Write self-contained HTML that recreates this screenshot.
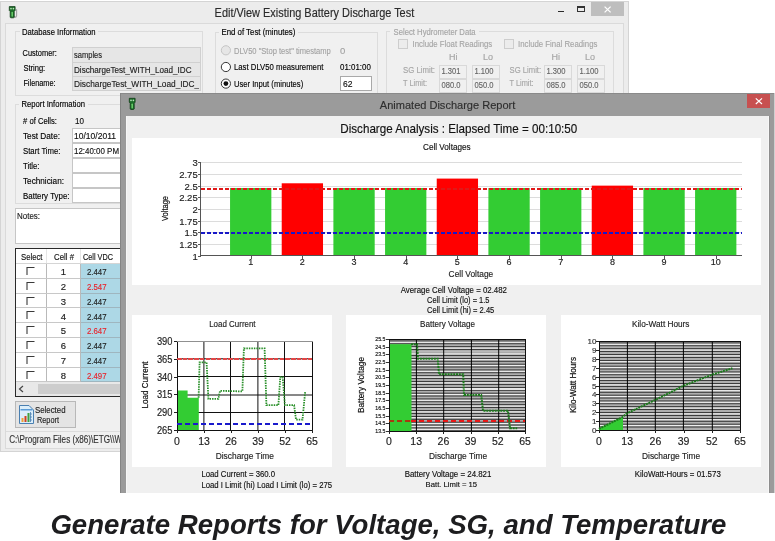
<!DOCTYPE html><html><head><meta charset="utf-8"><style>html,body{margin:0;padding:0;background:#fff;overflow:hidden;}svg{display:block;will-change:transform;}text{font-family:"Liberation Sans",sans-serif;white-space:pre;}.ui text{stroke-width:0.25;paint-order:stroke;}</style></head><body>
<svg width="775" height="541" viewBox="0 0 775 541" shape-rendering="crispEdges">
<rect x="0" y="0" width="775" height="541" fill="#ffffff" />
<rect x="0" y="1" width="629" height="451" fill="#ececec" />
<rect x="5" y="23" width="619" height="426" fill="#f0f0f0" />
<rect x="0.5" y="1.5" width="628" height="450" fill="none" stroke="#d4d4d4" stroke-width="1"/>
<g transform="translate(9,6.3)" shape-rendering="geometricPrecision"><path d="M6.8 3.5 H7.6 V9.5 L6.8 10.8 H5" fill="none" stroke="#a0a0a0" stroke-width="1.1"/><path d="M0.3 0.3 H6.1 V4.2 L5.2 5.2 V11 L4.4 11.5 H1.8 L1.2 11 V5.2 L0.3 4.2 Z" fill="#1d6e2a" stroke="#123d18" stroke-width="0.8"/><circle cx="2" cy="2.3" r="0.85" fill="#b8e4b8"/><circle cx="4.4" cy="2.3" r="0.85" fill="#b8e4b8"/><rect x="2.5" y="5.5" width="1.4" height="5" rx="0.7" fill="#6fd46f"/></g>
<text x="214.6" y="17" font-size="12.3" fill="#2b2b2b" text-anchor="start" font-weight="normal" font-style="normal" textLength="199.6" lengthAdjust="spacingAndGlyphs" stroke="#2b2b2b" stroke-width="0.15" >Edit/View Existing Battery Discharge Test</text>
<line x1="558" y1="11.3" x2="564" y2="11.3" stroke="#2a2a2a" stroke-width="1.6"/>
<rect x="577.5" y="6.5" width="7" height="5" fill="none" stroke="#333" stroke-width="1"/>
<line x1="577" y1="7.5" x2="585" y2="7.5" stroke="#333" stroke-width="1"/>
<rect x="591" y="2" width="33" height="14" fill="#bebebe" />
<path d="M604.6 6.6 L610.6 12.4 M610.6 6.6 L604.6 12.4" stroke="#fff" stroke-width="1.3" shape-rendering="geometricPrecision"/>
<rect x="5.5" y="23.5" width="618" height="425" fill="none" stroke="#dadada" stroke-width="1"/>
<rect x="15.5" y="31.5" width="187" height="64" fill="none" stroke="#dcdcdc" stroke-width="1"/>
<rect x="20" y="28" width="78" height="6" fill="#f0f0f0" />
<text x="22" y="34.8" font-size="9" fill="#000000" text-anchor="start" font-weight="normal" font-style="normal" textLength="73.5" lengthAdjust="spacingAndGlyphs" stroke="#000000" stroke-width="0.15" >Database Information</text>
<text x="22.6" y="56" font-size="9.5" fill="#000000" text-anchor="start" font-weight="normal" font-style="normal" textLength="34.2" lengthAdjust="spacingAndGlyphs" stroke="#000000" stroke-width="0.15" >Customer:</text>
<text x="23.4" y="70.8" font-size="9.5" fill="#000000" text-anchor="start" font-weight="normal" font-style="normal" textLength="21.8" lengthAdjust="spacingAndGlyphs" stroke="#000000" stroke-width="0.15" >String:</text>
<text x="23.4" y="85.6" font-size="9.5" fill="#000000" text-anchor="start" font-weight="normal" font-style="normal" textLength="32.2" lengthAdjust="spacingAndGlyphs" stroke="#000000" stroke-width="0.15" >Filename:</text>
<rect x="72.5" y="47.5" width="128" height="15" fill="#e6e6e6" stroke="#d0d0d0" stroke-width="1"/>
<rect x="72.5" y="62.5" width="128" height="14" fill="#e6e6e6" stroke="#d0d0d0" stroke-width="1"/>
<rect x="72.5" y="76.5" width="128" height="14" fill="#e6e6e6" stroke="#d0d0d0" stroke-width="1"/>
<text x="74" y="58" font-size="9.5" fill="#222" text-anchor="start" font-weight="normal" font-style="normal" textLength="28" lengthAdjust="spacingAndGlyphs" stroke="#222" stroke-width="0.15" >samples</text>
<text x="74" y="72.6" font-size="9.5" fill="#222" text-anchor="start" font-weight="normal" font-style="normal" textLength="117.5" lengthAdjust="spacingAndGlyphs" stroke="#222" stroke-width="0.15" >DischargeTest_WITH_Load_IDC</text>
<svg x="72" y="76" width="127" height="15" overflow="hidden">
<text x="2" y="11.1" font-size="9.5" fill="#222" text-anchor="start" font-weight="normal" font-style="normal" textLength="128" lengthAdjust="spacingAndGlyphs" stroke="#222" stroke-width="0.15" >DischargeTest_WITH_Load_IDC_(</text>
</svg>
<rect x="215.5" y="32.5" width="162" height="67" fill="none" stroke="#dcdcdc" stroke-width="1"/>
<rect x="219" y="29" width="79" height="6" fill="#f0f0f0" />
<text x="221.4" y="34.8" font-size="9" fill="#000000" text-anchor="start" font-weight="normal" font-style="normal" textLength="74" lengthAdjust="spacingAndGlyphs" stroke="#000000" stroke-width="0.15" >End of Test (minutes)</text>
<circle cx="225.9" cy="50.3" r="4.6" fill="#e6e6e6" stroke="#c4c4c4" shape-rendering="geometricPrecision"/>
<circle cx="225.9" cy="67" r="4.6" fill="#fff" stroke="#333" shape-rendering="geometricPrecision"/>
<circle cx="225.9" cy="83.6" r="4.6" fill="#fff" stroke="#333" shape-rendering="geometricPrecision"/>
<circle cx="225.9" cy="83.6" r="2.4" fill="#111" shape-rendering="geometricPrecision"/>
<text x="234" y="53.5" font-size="9.5" fill="#a3a3a3" text-anchor="start" font-weight="normal" font-style="normal" textLength="96.8" lengthAdjust="spacingAndGlyphs" stroke="#a3a3a3" stroke-width="0.15" >DLV50 "Stop test" timestamp</text>
<text x="340" y="53.5" font-size="9.5" fill="#a3a3a3" text-anchor="start" font-weight="normal" font-style="normal" stroke="#a3a3a3" stroke-width="0.15" >0</text>
<text x="234" y="70.3" font-size="9.5" fill="#000000" text-anchor="start" font-weight="normal" font-style="normal" textLength="89.4" lengthAdjust="spacingAndGlyphs" stroke="#000000" stroke-width="0.15" >Last DLV50 measurement</text>
<text x="340" y="70.3" font-size="9.5" fill="#000000" text-anchor="start" font-weight="normal" font-style="normal" textLength="30.8" lengthAdjust="spacingAndGlyphs" stroke="#000000" stroke-width="0.15" >01:01:00</text>
<text x="234" y="86.6" font-size="9.5" fill="#000000" text-anchor="start" font-weight="normal" font-style="normal" textLength="69.2" lengthAdjust="spacingAndGlyphs" stroke="#000000" stroke-width="0.15" >User Input (minutes)</text>
<rect x="340.5" y="76.5" width="31" height="14" fill="#ffffff" stroke="#a9a9a9" stroke-width="1"/>
<text x="343" y="86.6" font-size="9.5" fill="#111" text-anchor="start" font-weight="normal" font-style="normal" textLength="9.5" lengthAdjust="spacingAndGlyphs" stroke="#111" stroke-width="0.15" >62</text>
<rect x="386.5" y="31.5" width="227" height="68" fill="none" stroke="#dcdcdc" stroke-width="1"/>
<rect x="390" y="28" width="89" height="6" fill="#f0f0f0" />
<text x="393.6" y="34.7" font-size="9" fill="#a5a5a5" text-anchor="start" font-weight="normal" font-style="normal" textLength="82" lengthAdjust="spacingAndGlyphs" stroke="#a5a5a5" stroke-width="0.15" >Select Hydrometer Data</text>
<rect x="398.5" y="39.5" width="9" height="9" fill="#ececec" stroke="#cdcdcd" stroke-width="1"/>
<text x="412.5" y="47.1" font-size="9.5" fill="#a5a5a5" text-anchor="start" font-weight="normal" font-style="normal" textLength="79.7" lengthAdjust="spacingAndGlyphs" stroke="#a5a5a5" stroke-width="0.15" >Include Float Readings</text>
<rect x="504.5" y="39.5" width="9" height="9" fill="#ececec" stroke="#cdcdcd" stroke-width="1"/>
<text x="518" y="47.1" font-size="9.5" fill="#a5a5a5" text-anchor="start" font-weight="normal" font-style="normal" textLength="79.4" lengthAdjust="spacingAndGlyphs" stroke="#a5a5a5" stroke-width="0.15" >Include Final Readings</text>
<text x="449.0" y="59.5" font-size="9" fill="#a5a5a5" text-anchor="start" font-weight="normal" font-style="normal" stroke="#a5a5a5" stroke-width="0.15" >Hi</text>
<text x="483" y="59.5" font-size="9" fill="#a5a5a5" text-anchor="start" font-weight="normal" font-style="normal" stroke="#a5a5a5" stroke-width="0.15" >Lo</text>
<text x="403" y="73.2" font-size="9.5" fill="#a5a5a5" text-anchor="start" font-weight="normal" font-style="normal" textLength="32" lengthAdjust="spacingAndGlyphs" stroke="#a5a5a5" stroke-width="0.15" >SG Limit:</text>
<text x="403" y="85.8" font-size="9.5" fill="#a5a5a5" text-anchor="start" font-weight="normal" font-style="normal" textLength="24" lengthAdjust="spacingAndGlyphs" stroke="#a5a5a5" stroke-width="0.15" >T Limit:</text>
<rect x="439.5" y="65.5" width="27" height="13" fill="#f0f0f0" stroke="#d9d9d9" stroke-width="1"/>
<rect x="472.5" y="65.5" width="27" height="13" fill="#f0f0f0" stroke="#d9d9d9" stroke-width="1"/>
<rect x="439.5" y="79.5" width="27" height="13" fill="#f0f0f0" stroke="#d9d9d9" stroke-width="1"/>
<rect x="472.5" y="79.5" width="27" height="13" fill="#f0f0f0" stroke="#d9d9d9" stroke-width="1"/>
<text x="441.5" y="74.3" font-size="9.5" fill="#666666" text-anchor="start" font-weight="normal" font-style="normal" textLength="19" lengthAdjust="spacingAndGlyphs" stroke="#666666" stroke-width="0.15" >1.301</text>
<text x="474.5" y="74.3" font-size="9.5" fill="#666666" text-anchor="start" font-weight="normal" font-style="normal" textLength="19" lengthAdjust="spacingAndGlyphs" stroke="#666666" stroke-width="0.15" >1.100</text>
<text x="441.5" y="88.4" font-size="9.5" fill="#666666" text-anchor="start" font-weight="normal" font-style="normal" textLength="19" lengthAdjust="spacingAndGlyphs" stroke="#666666" stroke-width="0.15" >080.0</text>
<text x="474.5" y="88.4" font-size="9.5" fill="#666666" text-anchor="start" font-weight="normal" font-style="normal" textLength="19" lengthAdjust="spacingAndGlyphs" stroke="#666666" stroke-width="0.15" >050.0</text>
<text x="551.5" y="59.5" font-size="9" fill="#a5a5a5" text-anchor="start" font-weight="normal" font-style="normal" stroke="#a5a5a5" stroke-width="0.15" >Hi</text>
<text x="585" y="59.5" font-size="9" fill="#a5a5a5" text-anchor="start" font-weight="normal" font-style="normal" stroke="#a5a5a5" stroke-width="0.15" >Lo</text>
<text x="509.6" y="73.2" font-size="9.5" fill="#a5a5a5" text-anchor="start" font-weight="normal" font-style="normal" textLength="31.5" lengthAdjust="spacingAndGlyphs" stroke="#a5a5a5" stroke-width="0.15" >SG Limit:</text>
<text x="509.6" y="85.8" font-size="9.5" fill="#a5a5a5" text-anchor="start" font-weight="normal" font-style="normal" textLength="24" lengthAdjust="spacingAndGlyphs" stroke="#a5a5a5" stroke-width="0.15" >T Limit:</text>
<rect x="544.5" y="65.5" width="27" height="13" fill="#f0f0f0" stroke="#d9d9d9" stroke-width="1"/>
<rect x="577.5" y="65.5" width="27" height="13" fill="#f0f0f0" stroke="#d9d9d9" stroke-width="1"/>
<rect x="544.5" y="79.5" width="27" height="13" fill="#f0f0f0" stroke="#d9d9d9" stroke-width="1"/>
<rect x="577.5" y="79.5" width="27" height="13" fill="#f0f0f0" stroke="#d9d9d9" stroke-width="1"/>
<text x="546.5" y="74.3" font-size="9.5" fill="#666666" text-anchor="start" font-weight="normal" font-style="normal" textLength="19" lengthAdjust="spacingAndGlyphs" stroke="#666666" stroke-width="0.15" >1.300</text>
<text x="579.5" y="74.3" font-size="9.5" fill="#666666" text-anchor="start" font-weight="normal" font-style="normal" textLength="19" lengthAdjust="spacingAndGlyphs" stroke="#666666" stroke-width="0.15" >1.100</text>
<text x="546.5" y="88.4" font-size="9.5" fill="#666666" text-anchor="start" font-weight="normal" font-style="normal" textLength="19" lengthAdjust="spacingAndGlyphs" stroke="#666666" stroke-width="0.15" >085.0</text>
<text x="579.5" y="88.4" font-size="9.5" fill="#666666" text-anchor="start" font-weight="normal" font-style="normal" textLength="19" lengthAdjust="spacingAndGlyphs" stroke="#666666" stroke-width="0.15" >050.0</text>
<rect x="15.5" y="104.5" width="114" height="99" fill="none" stroke="#dcdcdc" stroke-width="1"/>
<rect x="19" y="101" width="69" height="6" fill="#f0f0f0" />
<text x="21.5" y="107.3" font-size="9" fill="#000000" text-anchor="start" font-weight="normal" font-style="normal" textLength="63.5" lengthAdjust="spacingAndGlyphs" stroke="#000000" stroke-width="0.15" >Report Information</text>
<text x="23" y="124.3" font-size="9.5" fill="#000000" text-anchor="start" font-weight="normal" font-style="normal" textLength="34" lengthAdjust="spacingAndGlyphs" stroke="#000000" stroke-width="0.15" ># of Cells:</text>
<text x="75" y="123.5" font-size="9.5" fill="#111" text-anchor="start" font-weight="normal" font-style="normal" textLength="9" lengthAdjust="spacingAndGlyphs" stroke="#111" stroke-width="0.15" >10</text>
<text x="23" y="139.2" font-size="9.5" fill="#000000" text-anchor="start" font-weight="normal" font-style="normal" textLength="37" lengthAdjust="spacingAndGlyphs" stroke="#000000" stroke-width="0.15" >Test Date:</text>
<rect x="72.5" y="128.5" width="62" height="14" fill="#ffffff" stroke="#c6c6c6" stroke-width="1"/>
<text x="23" y="154.04999999999998" font-size="9.5" fill="#000000" text-anchor="start" font-weight="normal" font-style="normal" textLength="37.5" lengthAdjust="spacingAndGlyphs" stroke="#000000" stroke-width="0.15" >Start Time:</text>
<rect x="72.5" y="143.5" width="62" height="14" fill="#ffffff" stroke="#c6c6c6" stroke-width="1"/>
<text x="23" y="168.89999999999998" font-size="9.5" fill="#000000" text-anchor="start" font-weight="normal" font-style="normal" textLength="16.5" lengthAdjust="spacingAndGlyphs" stroke="#000000" stroke-width="0.15" >Title:</text>
<rect x="72.5" y="158.5" width="62" height="14" fill="#ffffff" stroke="#c6c6c6" stroke-width="1"/>
<text x="23" y="183.75" font-size="9.5" fill="#000000" text-anchor="start" font-weight="normal" font-style="normal" textLength="41" lengthAdjust="spacingAndGlyphs" stroke="#000000" stroke-width="0.15" >Technician:</text>
<rect x="72.5" y="173.5" width="62" height="14" fill="#ffffff" stroke="#c6c6c6" stroke-width="1"/>
<text x="23" y="198.6" font-size="9.5" fill="#000000" text-anchor="start" font-weight="normal" font-style="normal" textLength="46.5" lengthAdjust="spacingAndGlyphs" stroke="#000000" stroke-width="0.15" >Battery Type:</text>
<rect x="72.5" y="188.5" width="62" height="14" fill="#ffffff" stroke="#c6c6c6" stroke-width="1"/>
<text x="74" y="139.3" font-size="9.5" fill="#111" text-anchor="start" font-weight="normal" font-style="normal" textLength="42" lengthAdjust="spacingAndGlyphs" stroke="#111" stroke-width="0.15" >10/10/2011</text>
<text x="74" y="154.1" font-size="9.5" fill="#111" text-anchor="start" font-weight="normal" font-style="normal" textLength="45" lengthAdjust="spacingAndGlyphs" stroke="#111" stroke-width="0.15" >12:40:00 PM</text>
<rect x="15.5" y="208.5" width="119" height="35" fill="#ffffff" stroke="#c6c6c6" stroke-width="1"/>
<text x="17" y="219" font-size="9.5" fill="#222" text-anchor="start" font-weight="normal" font-style="normal" textLength="23" lengthAdjust="spacingAndGlyphs" stroke="#222" stroke-width="0.15" >Notes:</text>
<rect x="15" y="248" width="110" height="149" fill="#ffffff" />
<rect x="81" y="264" width="40" height="118.5" fill="#add8e6" />
<rect x="16" y="249" width="105" height="15" fill="#ffffff" />
<line x1="46.5" y1="249" x2="46.5" y2="264" stroke="#e6e6e6" stroke-width="1"/>
<line x1="80.5" y1="249" x2="80.5" y2="264" stroke="#e6e6e6" stroke-width="1"/>
<text x="21" y="259.5" font-size="9.5" fill="#111" text-anchor="start" font-weight="normal" font-style="normal" textLength="21.5" lengthAdjust="spacingAndGlyphs" stroke="#111" stroke-width="0.15" >Select</text>
<text x="54" y="259.5" font-size="9.5" fill="#111" text-anchor="start" font-weight="normal" font-style="normal" textLength="20" lengthAdjust="spacingAndGlyphs" stroke="#111" stroke-width="0.15" >Cell #</text>
<text x="83" y="259.5" font-size="9.5" fill="#111" text-anchor="start" font-weight="normal" font-style="normal" textLength="30" lengthAdjust="spacingAndGlyphs" stroke="#111" stroke-width="0.15" >Cell VDC</text>
<line x1="16" y1="263.5" x2="121" y2="263.5" stroke="#d5d5d5" stroke-width="1"/>
<line x1="16" y1="278.5" x2="121" y2="278.5" stroke="#9fb6bf" stroke-width="1"/>
<path d="M27 275 V267.5 H34.5" fill="none" stroke="#3a3a3a" stroke-width="1.1" shape-rendering="geometricPrecision"/>
<text x="63.5" y="275.2" font-size="9.5" fill="#222" text-anchor="middle" font-weight="normal" font-style="normal" stroke="#222" stroke-width="0.15" >1</text>
<text x="87" y="275.2" font-size="9.5" fill="#1e1e1e" text-anchor="start" font-weight="normal" font-style="normal" textLength="19.5" lengthAdjust="spacingAndGlyphs" stroke="#1e1e1e" stroke-width="0.15" >2.447</text>
<line x1="16" y1="293.5" x2="121" y2="293.5" stroke="#9fb6bf" stroke-width="1"/>
<path d="M27 290 V282.5 H34.5" fill="none" stroke="#3a3a3a" stroke-width="1.1" shape-rendering="geometricPrecision"/>
<text x="63.5" y="290.0" font-size="9.5" fill="#222" text-anchor="middle" font-weight="normal" font-style="normal" stroke="#222" stroke-width="0.15" >2</text>
<text x="87" y="290.0" font-size="9.5" fill="#e8242c" text-anchor="start" font-weight="normal" font-style="normal" textLength="19.5" lengthAdjust="spacingAndGlyphs" stroke="#e8242c" stroke-width="0.15" >2.547</text>
<line x1="16" y1="307.5" x2="121" y2="307.5" stroke="#9fb6bf" stroke-width="1"/>
<path d="M27 305 V297.5 H34.5" fill="none" stroke="#3a3a3a" stroke-width="1.1" shape-rendering="geometricPrecision"/>
<text x="63.5" y="304.8" font-size="9.5" fill="#222" text-anchor="middle" font-weight="normal" font-style="normal" stroke="#222" stroke-width="0.15" >3</text>
<text x="87" y="304.8" font-size="9.5" fill="#1e1e1e" text-anchor="start" font-weight="normal" font-style="normal" textLength="19.5" lengthAdjust="spacingAndGlyphs" stroke="#1e1e1e" stroke-width="0.15" >2.447</text>
<line x1="16" y1="322.5" x2="121" y2="322.5" stroke="#9fb6bf" stroke-width="1"/>
<path d="M27 319 V311.5 H34.5" fill="none" stroke="#3a3a3a" stroke-width="1.1" shape-rendering="geometricPrecision"/>
<text x="63.5" y="319.59999999999997" font-size="9.5" fill="#222" text-anchor="middle" font-weight="normal" font-style="normal" stroke="#222" stroke-width="0.15" >4</text>
<text x="87" y="319.59999999999997" font-size="9.5" fill="#1e1e1e" text-anchor="start" font-weight="normal" font-style="normal" textLength="19.5" lengthAdjust="spacingAndGlyphs" stroke="#1e1e1e" stroke-width="0.15" >2.447</text>
<line x1="16" y1="337.5" x2="121" y2="337.5" stroke="#9fb6bf" stroke-width="1"/>
<path d="M27 334 V326.5 H34.5" fill="none" stroke="#3a3a3a" stroke-width="1.1" shape-rendering="geometricPrecision"/>
<text x="63.5" y="334.4" font-size="9.5" fill="#222" text-anchor="middle" font-weight="normal" font-style="normal" stroke="#222" stroke-width="0.15" >5</text>
<text x="87" y="334.4" font-size="9.5" fill="#e8242c" text-anchor="start" font-weight="normal" font-style="normal" textLength="19.5" lengthAdjust="spacingAndGlyphs" stroke="#e8242c" stroke-width="0.15" >2.647</text>
<line x1="16" y1="352.5" x2="121" y2="352.5" stroke="#9fb6bf" stroke-width="1"/>
<path d="M27 349 V341.5 H34.5" fill="none" stroke="#3a3a3a" stroke-width="1.1" shape-rendering="geometricPrecision"/>
<text x="63.5" y="349.2" font-size="9.5" fill="#222" text-anchor="middle" font-weight="normal" font-style="normal" stroke="#222" stroke-width="0.15" >6</text>
<text x="87" y="349.2" font-size="9.5" fill="#1e1e1e" text-anchor="start" font-weight="normal" font-style="normal" textLength="19.5" lengthAdjust="spacingAndGlyphs" stroke="#1e1e1e" stroke-width="0.15" >2.447</text>
<line x1="16" y1="367.5" x2="121" y2="367.5" stroke="#9fb6bf" stroke-width="1"/>
<path d="M27 364 V356.5 H34.5" fill="none" stroke="#3a3a3a" stroke-width="1.1" shape-rendering="geometricPrecision"/>
<text x="63.5" y="364.0" font-size="9.5" fill="#222" text-anchor="middle" font-weight="normal" font-style="normal" stroke="#222" stroke-width="0.15" >7</text>
<text x="87" y="364.0" font-size="9.5" fill="#1e1e1e" text-anchor="start" font-weight="normal" font-style="normal" textLength="19.5" lengthAdjust="spacingAndGlyphs" stroke="#1e1e1e" stroke-width="0.15" >2.447</text>
<line x1="16" y1="381.5" x2="121" y2="381.5" stroke="#9fb6bf" stroke-width="1"/>
<path d="M27 379 V371.5 H34.5" fill="none" stroke="#3a3a3a" stroke-width="1.1" shape-rendering="geometricPrecision"/>
<text x="63.5" y="378.8" font-size="9.5" fill="#222" text-anchor="middle" font-weight="normal" font-style="normal" stroke="#222" stroke-width="0.15" >8</text>
<text x="87" y="378.8" font-size="9.5" fill="#e8242c" text-anchor="start" font-weight="normal" font-style="normal" textLength="19.5" lengthAdjust="spacingAndGlyphs" stroke="#e8242c" stroke-width="0.15" >2.497</text>
<line x1="46.5" y1="264" x2="46.5" y2="382" stroke="#b9b9b9" stroke-width="1"/>
<line x1="80.5" y1="264" x2="80.5" y2="382" stroke="#b9b9b9" stroke-width="1"/>
<line x1="16" y1="278.5" x2="80" y2="278.5" stroke="#c8c8c8" stroke-width="1"/>
<line x1="16" y1="293.5" x2="80" y2="293.5" stroke="#c8c8c8" stroke-width="1"/>
<line x1="16" y1="307.5" x2="80" y2="307.5" stroke="#c8c8c8" stroke-width="1"/>
<line x1="16" y1="322.5" x2="80" y2="322.5" stroke="#c8c8c8" stroke-width="1"/>
<line x1="16" y1="337.5" x2="80" y2="337.5" stroke="#c8c8c8" stroke-width="1"/>
<line x1="16" y1="352.5" x2="80" y2="352.5" stroke="#c8c8c8" stroke-width="1"/>
<line x1="16" y1="367.5" x2="80" y2="367.5" stroke="#c8c8c8" stroke-width="1"/>
<line x1="16" y1="381.5" x2="80" y2="381.5" stroke="#c8c8c8" stroke-width="1"/>
<rect x="16" y="382" width="105" height="14" fill="#e8e8e8" />
<rect x="38" y="384" width="83" height="10" fill="#cdcdcd" />
<path d="M23 386 L19.5 389 L23 392" fill="none" stroke="#444" stroke-width="1.2" shape-rendering="geometricPrecision"/>
<rect x="15.5" y="248.5" width="109" height="148" fill="none" stroke="#2a2a2a" stroke-width="1"/>
<rect x="15.5" y="401.5" width="60" height="26" fill="#e4e4e4" stroke="#b8b8b8" stroke-width="1"/>
<g transform="translate(19,405)" shape-rendering="geometricPrecision"><path d="M0.5 0.5 H10 L14.5 5 V18.5 H0.5 Z" fill="#dbeefa" stroke="#4a7fb0" stroke-width="1"/><rect x="1.5" y="4" width="12" height="1.5" fill="#5b9bd5"/><rect x="2.5" y="13" width="2" height="4" fill="#f0a030"/><rect x="5.5" y="11" width="2" height="6" fill="#d04020"/><rect x="8.5" y="8" width="2" height="9" fill="#40a040"/><path d="M11.5 7 V17 M11 9 h2 M11 12 h2 M11 15 h2" stroke="#4a7fb0" stroke-width="0.8"/></g>
<text x="35" y="413.2" font-size="9.5" fill="#222" text-anchor="start" font-weight="normal" font-style="normal" textLength="30.5" lengthAdjust="spacingAndGlyphs" stroke="#222" stroke-width="0.15" >Selected</text>
<text x="37" y="423.3" font-size="9.5" fill="#222" text-anchor="start" font-weight="normal" font-style="normal" textLength="22" lengthAdjust="spacingAndGlyphs" stroke="#222" stroke-width="0.15" >Report</text>
<line x1="6" y1="431.5" x2="623" y2="431.5" stroke="#dcdcdc" stroke-width="1"/>
<text x="9.2" y="443" font-size="10" fill="#333" text-anchor="start" font-weight="normal" font-style="normal" textLength="113" lengthAdjust="spacingAndGlyphs" stroke="#333" stroke-width="0.15" >C:\Program Files (x86)\ETG\\W</text>
<rect x="120" y="93" width="654" height="400" fill="#9b9b9b" />
<rect x="774" y="93" width="1" height="400" fill="#d0d0d0" />
<rect x="120" y="93" width="654" height="1" fill="#8a8a8a" />
<rect x="120" y="93" width="1" height="400" fill="#858585" />
<rect x="769" y="116" width="1" height="377" fill="#8e8e8e" />
<rect x="126" y="116" width="643" height="377" fill="#f0f0f0" />
<rect x="126" y="116" width="1" height="377" fill="#f7f7f7" />
<rect x="768" y="116" width="1" height="377" fill="#f7f7f7" />
<g transform="translate(129,98)" shape-rendering="geometricPrecision"><path d="M6.8 3.5 H7.6 V9.5 L6.8 10.8 H5" fill="none" stroke="#a0a0a0" stroke-width="1.1"/><path d="M0.3 0.3 H6.1 V4.2 L5.2 5.2 V11 L4.4 11.5 H1.8 L1.2 11 V5.2 L0.3 4.2 Z" fill="#1d6e2a" stroke="#123d18" stroke-width="0.8"/><circle cx="2" cy="2.3" r="0.85" fill="#b8e4b8"/><circle cx="4.4" cy="2.3" r="0.85" fill="#b8e4b8"/><rect x="2.5" y="5.5" width="1.4" height="5" rx="0.7" fill="#6fd46f"/></g>
<text x="379.8" y="108.6" font-size="11.3" fill="#2e2e2e" text-anchor="start" font-weight="normal" font-style="normal" textLength="135.5" lengthAdjust="spacingAndGlyphs" stroke="#2e2e2e" stroke-width="0.15" >Animated Discharge Report</text>
<rect x="747" y="94" width="23" height="14" fill="#c75050" />
<path d="M755.8 98.4 L762 104 M762 98.4 L755.8 104" stroke="#fff" stroke-width="1.2" shape-rendering="geometricPrecision"/>
<text x="340.3" y="133" font-size="12.8" fill="#111" text-anchor="start" font-weight="normal" font-style="normal" textLength="237" lengthAdjust="spacingAndGlyphs" stroke="#111" stroke-width="0.15" >Discharge Analysis : Elapsed Time = 00:10:50</text>
<rect x="132" y="138" width="629" height="147" fill="#ffffff" />
<text x="423" y="149.7" font-size="9" fill="#111" text-anchor="start" font-weight="normal" font-style="normal" textLength="47.6" lengthAdjust="spacingAndGlyphs" stroke="#111" stroke-width="0.15" >Cell Voltages</text>
<text x="197.7" y="259.8" font-size="9.5" fill="#222" text-anchor="end" font-weight="normal" font-style="normal" stroke="#222" stroke-width="0.15" >1</text>
<line x1="198" y1="256.5" x2="201" y2="256.5" stroke="#555" stroke-width="1"/>
<line x1="201" y1="244.5" x2="742" y2="244.5" stroke="#dcdcdc" stroke-width="1"/>
<text x="197.7" y="247.8" font-size="9.5" fill="#222" text-anchor="end" font-weight="normal" font-style="normal" stroke="#222" stroke-width="0.15" >1.25</text>
<line x1="198" y1="244.5" x2="201" y2="244.5" stroke="#555" stroke-width="1"/>
<line x1="201" y1="232.5" x2="742" y2="232.5" stroke="#dcdcdc" stroke-width="1"/>
<text x="197.7" y="235.8" font-size="9.5" fill="#222" text-anchor="end" font-weight="normal" font-style="normal" stroke="#222" stroke-width="0.15" >1.5</text>
<line x1="198" y1="232.5" x2="201" y2="232.5" stroke="#555" stroke-width="1"/>
<line x1="201" y1="221.5" x2="742" y2="221.5" stroke="#dcdcdc" stroke-width="1"/>
<text x="197.7" y="224.8" font-size="9.5" fill="#222" text-anchor="end" font-weight="normal" font-style="normal" stroke="#222" stroke-width="0.15" >1.75</text>
<line x1="198" y1="221.5" x2="201" y2="221.5" stroke="#555" stroke-width="1"/>
<line x1="201" y1="209.5" x2="742" y2="209.5" stroke="#dcdcdc" stroke-width="1"/>
<text x="197.7" y="212.8" font-size="9.5" fill="#222" text-anchor="end" font-weight="normal" font-style="normal" stroke="#222" stroke-width="0.15" >2</text>
<line x1="198" y1="209.5" x2="201" y2="209.5" stroke="#555" stroke-width="1"/>
<line x1="201" y1="197.5" x2="742" y2="197.5" stroke="#dcdcdc" stroke-width="1"/>
<text x="197.7" y="200.8" font-size="9.5" fill="#222" text-anchor="end" font-weight="normal" font-style="normal" stroke="#222" stroke-width="0.15" >2.25</text>
<line x1="198" y1="197.5" x2="201" y2="197.5" stroke="#555" stroke-width="1"/>
<line x1="201" y1="186.5" x2="742" y2="186.5" stroke="#dcdcdc" stroke-width="1"/>
<text x="197.7" y="189.8" font-size="9.5" fill="#222" text-anchor="end" font-weight="normal" font-style="normal" stroke="#222" stroke-width="0.15" >2.5</text>
<line x1="198" y1="186.5" x2="201" y2="186.5" stroke="#555" stroke-width="1"/>
<line x1="201" y1="174.5" x2="742" y2="174.5" stroke="#dcdcdc" stroke-width="1"/>
<text x="197.7" y="177.8" font-size="9.5" fill="#222" text-anchor="end" font-weight="normal" font-style="normal" stroke="#222" stroke-width="0.15" >2.75</text>
<line x1="198" y1="174.5" x2="201" y2="174.5" stroke="#555" stroke-width="1"/>
<line x1="201" y1="162.5" x2="742" y2="162.5" stroke="#dcdcdc" stroke-width="1"/>
<text x="197.7" y="165.8" font-size="9.5" fill="#222" text-anchor="end" font-weight="normal" font-style="normal" stroke="#222" stroke-width="0.15" >3</text>
<line x1="198" y1="162.5" x2="201" y2="162.5" stroke="#555" stroke-width="1"/>
<rect x="230.05" y="187.99" width="41.3" height="68.01" fill="#33cc33" shape-rendering="geometricPrecision"/>
<text x="250.7" y="264.5" font-size="9" fill="#222" text-anchor="middle" font-weight="normal" font-style="normal" stroke="#222" stroke-width="0.15" >1</text>
<line x1="251.5" y1="256" x2="251.5" y2="259" stroke="#555" stroke-width="1"/>
<rect x="281.72" y="183.29" width="41.3" height="72.71" fill="#ff0000" shape-rendering="geometricPrecision"/>
<text x="302.37" y="264.5" font-size="9" fill="#222" text-anchor="middle" font-weight="normal" font-style="normal" stroke="#222" stroke-width="0.15" >2</text>
<line x1="302.5" y1="256" x2="302.5" y2="259" stroke="#555" stroke-width="1"/>
<rect x="333.39" y="187.99" width="41.3" height="68.01" fill="#33cc33" shape-rendering="geometricPrecision"/>
<text x="354.03999999999996" y="264.5" font-size="9" fill="#222" text-anchor="middle" font-weight="normal" font-style="normal" stroke="#222" stroke-width="0.15" >3</text>
<line x1="354.5" y1="256" x2="354.5" y2="259" stroke="#555" stroke-width="1"/>
<rect x="385.06" y="187.99" width="41.3" height="68.01" fill="#33cc33" shape-rendering="geometricPrecision"/>
<text x="405.71" y="264.5" font-size="9" fill="#222" text-anchor="middle" font-weight="normal" font-style="normal" stroke="#222" stroke-width="0.15" >4</text>
<line x1="406.5" y1="256" x2="406.5" y2="259" stroke="#555" stroke-width="1"/>
<rect x="436.73" y="178.59" width="41.3" height="77.41" fill="#ff0000" shape-rendering="geometricPrecision"/>
<text x="457.38" y="264.5" font-size="9" fill="#222" text-anchor="middle" font-weight="normal" font-style="normal" stroke="#222" stroke-width="0.15" >5</text>
<line x1="457.5" y1="256" x2="457.5" y2="259" stroke="#555" stroke-width="1"/>
<rect x="488.40" y="187.99" width="41.3" height="68.01" fill="#33cc33" shape-rendering="geometricPrecision"/>
<text x="509.05" y="264.5" font-size="9" fill="#222" text-anchor="middle" font-weight="normal" font-style="normal" stroke="#222" stroke-width="0.15" >6</text>
<line x1="509.5" y1="256" x2="509.5" y2="259" stroke="#555" stroke-width="1"/>
<rect x="540.07" y="187.99" width="41.3" height="68.01" fill="#33cc33" shape-rendering="geometricPrecision"/>
<text x="560.72" y="264.5" font-size="9" fill="#222" text-anchor="middle" font-weight="normal" font-style="normal" stroke="#222" stroke-width="0.15" >7</text>
<line x1="561.5" y1="256" x2="561.5" y2="259" stroke="#555" stroke-width="1"/>
<rect x="591.74" y="185.64" width="41.3" height="70.36" fill="#ff0000" shape-rendering="geometricPrecision"/>
<text x="612.39" y="264.5" font-size="9" fill="#222" text-anchor="middle" font-weight="normal" font-style="normal" stroke="#222" stroke-width="0.15" >8</text>
<line x1="612.5" y1="256" x2="612.5" y2="259" stroke="#555" stroke-width="1"/>
<rect x="643.41" y="187.99" width="41.3" height="68.01" fill="#33cc33" shape-rendering="geometricPrecision"/>
<text x="664.06" y="264.5" font-size="9" fill="#222" text-anchor="middle" font-weight="normal" font-style="normal" stroke="#222" stroke-width="0.15" >9</text>
<line x1="664.5" y1="256" x2="664.5" y2="259" stroke="#555" stroke-width="1"/>
<rect x="695.08" y="187.99" width="41.3" height="68.01" fill="#33cc33" shape-rendering="geometricPrecision"/>
<text x="715.73" y="264.5" font-size="9" fill="#222" text-anchor="middle" font-weight="normal" font-style="normal" stroke="#222" stroke-width="0.15" >10</text>
<line x1="716.5" y1="256" x2="716.5" y2="259" stroke="#555" stroke-width="1"/>
<line x1="201" y1="189" x2="742" y2="189" stroke="#e01818" stroke-width="2" stroke-dasharray="4 2"/>
<line x1="201" y1="233" x2="742" y2="233" stroke="#1818c8" stroke-width="2" stroke-dasharray="4 2"/>
<line x1="200.5" y1="162" x2="200.5" y2="257" stroke="#555" stroke-width="1"/>
<line x1="200" y1="255.5" x2="742" y2="255.5" stroke="#555" stroke-width="1"/>
<text x="0" y="0" font-size="8.5" fill="#111" stroke="#111" stroke-width="0.2" text-anchor="middle" transform="translate(168,208.5) rotate(-90)" textLength="25" lengthAdjust="spacingAndGlyphs">Voltage</text>
<text x="448.6" y="277" font-size="9" fill="#222" text-anchor="start" font-weight="normal" font-style="normal" textLength="44.6" lengthAdjust="spacingAndGlyphs" stroke="#222" stroke-width="0.15" >Cell Voltage</text>
<text x="400.7" y="293.3" font-size="9" fill="#111" text-anchor="start" font-weight="normal" font-style="normal" textLength="106.3" lengthAdjust="spacingAndGlyphs" stroke="#111" stroke-width="0.15" >Average Cell Voltage = 02.482</text>
<text x="427" y="303" font-size="9" fill="#111" text-anchor="start" font-weight="normal" font-style="normal" textLength="62.5" lengthAdjust="spacingAndGlyphs" stroke="#111" stroke-width="0.15" >Cell Limit (lo) = 1.5</text>
<text x="427" y="312.5" font-size="9" fill="#111" text-anchor="start" font-weight="normal" font-style="normal" textLength="67.3" lengthAdjust="spacingAndGlyphs" stroke="#111" stroke-width="0.15" >Cell Limit (hi) = 2.45</text>
<rect x="132" y="315" width="200" height="152" fill="#ffffff" />
<text x="209.2" y="326.8" font-size="9" fill="#222" text-anchor="start" font-weight="normal" font-style="normal" textLength="46.4" lengthAdjust="spacingAndGlyphs" stroke="#222" stroke-width="0.15" >Load Current</text>
<line x1="203.90" y1="341" x2="203.90" y2="430" stroke="#111" stroke-width="1" shape-rendering="geometricPrecision"/>
<line x1="230.50" y1="341" x2="230.50" y2="430" stroke="#111" stroke-width="1" shape-rendering="geometricPrecision"/>
<line x1="257.90" y1="341" x2="257.90" y2="430" stroke="#111" stroke-width="1" shape-rendering="geometricPrecision"/>
<line x1="284.50" y1="341" x2="284.50" y2="430" stroke="#111" stroke-width="1" shape-rendering="geometricPrecision"/>
<line x1="177" y1="412.50" x2="312" y2="412.50" stroke="#111" stroke-width="1" shape-rendering="geometricPrecision"/>
<line x1="177" y1="395.00" x2="312" y2="395.00" stroke="#111" stroke-width="1" shape-rendering="geometricPrecision"/>
<line x1="177" y1="376.50" x2="312" y2="376.50" stroke="#111" stroke-width="1" shape-rendering="geometricPrecision"/>
<line x1="177" y1="358.80" x2="312" y2="358.80" stroke="#111" stroke-width="1" shape-rendering="geometricPrecision"/>
<path d="M177 430 V390.6 H187.6 V397.8 H198.8 V430 Z" fill="#33cc33" shape-rendering="geometricPrecision"/>
<rect x="177.5" y="341.5" width="135" height="89" fill="none" stroke="#111" stroke-width="1"/>
<line x1="177" y1="341.5" x2="313" y2="341.5" stroke="#909090" stroke-width="1"/>
<text x="172.5" y="434.3" font-size="10.5" fill="#222" text-anchor="end" font-weight="normal" font-style="normal" textLength="15.6" lengthAdjust="spacingAndGlyphs" stroke="#222" stroke-width="0.15" >265</text>
<line x1="174" y1="430.5" x2="177" y2="430.5" stroke="#222" stroke-width="1"/>
<text x="172.5" y="416.3" font-size="10.5" fill="#222" text-anchor="end" font-weight="normal" font-style="normal" textLength="15.6" lengthAdjust="spacingAndGlyphs" stroke="#222" stroke-width="0.15" >290</text>
<line x1="174" y1="412.5" x2="177" y2="412.5" stroke="#222" stroke-width="1"/>
<text x="172.5" y="398.3" font-size="10.5" fill="#222" text-anchor="end" font-weight="normal" font-style="normal" textLength="15.6" lengthAdjust="spacingAndGlyphs" stroke="#222" stroke-width="0.15" >315</text>
<line x1="174" y1="394.5" x2="177" y2="394.5" stroke="#222" stroke-width="1"/>
<text x="172.5" y="381.3" font-size="10.5" fill="#222" text-anchor="end" font-weight="normal" font-style="normal" textLength="15.6" lengthAdjust="spacingAndGlyphs" stroke="#222" stroke-width="0.15" >340</text>
<line x1="174" y1="377.5" x2="177" y2="377.5" stroke="#222" stroke-width="1"/>
<text x="172.5" y="363.3" font-size="10.5" fill="#222" text-anchor="end" font-weight="normal" font-style="normal" textLength="15.6" lengthAdjust="spacingAndGlyphs" stroke="#222" stroke-width="0.15" >365</text>
<line x1="174" y1="359.5" x2="177" y2="359.5" stroke="#222" stroke-width="1"/>
<text x="172.5" y="345.3" font-size="10.5" fill="#222" text-anchor="end" font-weight="normal" font-style="normal" textLength="15.6" lengthAdjust="spacingAndGlyphs" stroke="#222" stroke-width="0.15" >390</text>
<line x1="174" y1="341.5" x2="177" y2="341.5" stroke="#222" stroke-width="1"/>
<line x1="177.5" y1="430" x2="177.5" y2="433" stroke="#222" stroke-width="1"/>
<line x1="204.5" y1="430" x2="204.5" y2="433" stroke="#222" stroke-width="1"/>
<line x1="231.5" y1="430" x2="231.5" y2="433" stroke="#222" stroke-width="1"/>
<line x1="258.5" y1="430" x2="258.5" y2="433" stroke="#222" stroke-width="1"/>
<line x1="285.5" y1="430" x2="285.5" y2="433" stroke="#222" stroke-width="1"/>
<line x1="312.5" y1="430" x2="312.5" y2="433" stroke="#222" stroke-width="1"/>
<line x1="177" y1="359" x2="312" y2="359" stroke="#e04545" stroke-width="2" stroke-dasharray="4.5 1.2"/>
<line x1="177" y1="424" x2="312" y2="424" stroke="#1a1acc" stroke-width="2" stroke-dasharray="5 3"/>
<path d="M198.6 397.8 L199.6 362.4 L206.6 362.4 L208.4 398.8 L218.4 398.8 L220.0 390.8 L242.4 391.4 L243.9 348.3 L264.6 348.3 L266.4 405.2 L278.4 405.2 L280.3 377.1 L282.7 377.1 L284.9 405.2 L294.1 405.2 L296.0 419.7 L302.5 419.7 L305.2 391.4" fill="none" stroke="#2a902a" stroke-width="1.8" stroke-dasharray="1.5 1" shape-rendering="geometricPrecision"/>
<text x="0" y="0" font-size="9" fill="#111" stroke="#111" stroke-width="0.2" text-anchor="middle" transform="translate(147.8,385) rotate(-90)" textLength="47" lengthAdjust="spacingAndGlyphs">Load Current</text>
<text x="177.0" y="444.8" font-size="10.5" fill="#222" text-anchor="middle" font-weight="normal" font-style="normal" stroke="#222" stroke-width="0.15" >0</text>
<text x="204.0" y="444.8" font-size="10.5" fill="#222" text-anchor="middle" font-weight="normal" font-style="normal" stroke="#222" stroke-width="0.15" >13</text>
<text x="231.0" y="444.8" font-size="10.5" fill="#222" text-anchor="middle" font-weight="normal" font-style="normal" stroke="#222" stroke-width="0.15" >26</text>
<text x="258.0" y="444.8" font-size="10.5" fill="#222" text-anchor="middle" font-weight="normal" font-style="normal" stroke="#222" stroke-width="0.15" >39</text>
<text x="285.0" y="444.8" font-size="10.5" fill="#222" text-anchor="middle" font-weight="normal" font-style="normal" stroke="#222" stroke-width="0.15" >52</text>
<text x="312.0" y="444.8" font-size="10.5" fill="#222" text-anchor="middle" font-weight="normal" font-style="normal" stroke="#222" stroke-width="0.15" >65</text>
<text x="215.7" y="458.5" font-size="9" fill="#222" text-anchor="start" font-weight="normal" font-style="normal" textLength="58.2" lengthAdjust="spacingAndGlyphs" stroke="#222" stroke-width="0.15" >Discharge Time</text>
<text x="201.4" y="477.3" font-size="9" fill="#111" text-anchor="start" font-weight="normal" font-style="normal" textLength="73.7" lengthAdjust="spacingAndGlyphs" stroke="#111" stroke-width="0.15" >Load Current = 360.0</text>
<text x="201.4" y="487.7" font-size="8.5" fill="#111" text-anchor="start" font-weight="normal" font-style="normal" textLength="130.7" lengthAdjust="spacingAndGlyphs" stroke="#111" stroke-width="0.15" >Load I Limit (hi) Load I Limit (lo) = 275</text>
<rect x="346" y="315" width="200" height="152" fill="#ffffff" />
<text x="420" y="326.8" font-size="9" fill="#222" text-anchor="start" font-weight="normal" font-style="normal" textLength="55" lengthAdjust="spacingAndGlyphs" stroke="#222" stroke-width="0.15" >Battery Voltage</text>
<rect x="389" y="339" width="136" height="92" fill="#aeaeae"/>
<rect x="389" y="340.60" width="136" height="0.65" fill="#000000" shape-rendering="geometricPrecision"/>
<rect x="389" y="341.90" width="136" height="0.8" fill="#ffffff" shape-rendering="geometricPrecision"/>
<rect x="389" y="343.50" width="136" height="0.65" fill="#000000" shape-rendering="geometricPrecision"/>
<rect x="389" y="346.40" width="136" height="0.65" fill="#000000" shape-rendering="geometricPrecision"/>
<rect x="389" y="347.70" width="136" height="0.8" fill="#ffffff" shape-rendering="geometricPrecision"/>
<rect x="389" y="349.30" width="136" height="0.65" fill="#000000" shape-rendering="geometricPrecision"/>
<rect x="389" y="352.20" width="136" height="0.65" fill="#000000" shape-rendering="geometricPrecision"/>
<rect x="389" y="353.50" width="136" height="0.8" fill="#ffffff" shape-rendering="geometricPrecision"/>
<rect x="389" y="355.10" width="136" height="0.65" fill="#000000" shape-rendering="geometricPrecision"/>
<rect x="389" y="358.00" width="136" height="0.65" fill="#000000" shape-rendering="geometricPrecision"/>
<rect x="389" y="359.30" width="136" height="0.8" fill="#ffffff" shape-rendering="geometricPrecision"/>
<rect x="389" y="360.90" width="136" height="0.65" fill="#000000" shape-rendering="geometricPrecision"/>
<rect x="389" y="363.80" width="136" height="0.65" fill="#000000" shape-rendering="geometricPrecision"/>
<rect x="389" y="365.10" width="136" height="0.8" fill="#ffffff" shape-rendering="geometricPrecision"/>
<rect x="389" y="366.70" width="136" height="0.65" fill="#000000" shape-rendering="geometricPrecision"/>
<rect x="389" y="369.60" width="136" height="0.65" fill="#000000" shape-rendering="geometricPrecision"/>
<rect x="389" y="370.90" width="136" height="0.8" fill="#ffffff" shape-rendering="geometricPrecision"/>
<rect x="389" y="372.50" width="136" height="0.65" fill="#000000" shape-rendering="geometricPrecision"/>
<rect x="389" y="375.40" width="136" height="0.65" fill="#000000" shape-rendering="geometricPrecision"/>
<rect x="389" y="376.70" width="136" height="0.8" fill="#ffffff" shape-rendering="geometricPrecision"/>
<rect x="389" y="378.30" width="136" height="0.65" fill="#000000" shape-rendering="geometricPrecision"/>
<rect x="389" y="381.20" width="136" height="0.65" fill="#000000" shape-rendering="geometricPrecision"/>
<rect x="389" y="382.50" width="136" height="0.8" fill="#ffffff" shape-rendering="geometricPrecision"/>
<rect x="389" y="384.10" width="136" height="0.65" fill="#000000" shape-rendering="geometricPrecision"/>
<rect x="389" y="387.00" width="136" height="0.65" fill="#000000" shape-rendering="geometricPrecision"/>
<rect x="389" y="388.30" width="136" height="0.8" fill="#ffffff" shape-rendering="geometricPrecision"/>
<rect x="389" y="389.90" width="136" height="0.65" fill="#000000" shape-rendering="geometricPrecision"/>
<rect x="389" y="392.80" width="136" height="0.65" fill="#000000" shape-rendering="geometricPrecision"/>
<rect x="389" y="394.10" width="136" height="0.8" fill="#ffffff" shape-rendering="geometricPrecision"/>
<rect x="389" y="395.70" width="136" height="0.65" fill="#000000" shape-rendering="geometricPrecision"/>
<rect x="389" y="398.60" width="136" height="0.65" fill="#000000" shape-rendering="geometricPrecision"/>
<rect x="389" y="399.90" width="136" height="0.8" fill="#ffffff" shape-rendering="geometricPrecision"/>
<rect x="389" y="401.50" width="136" height="0.65" fill="#000000" shape-rendering="geometricPrecision"/>
<rect x="389" y="404.40" width="136" height="0.65" fill="#000000" shape-rendering="geometricPrecision"/>
<rect x="389" y="405.70" width="136" height="0.8" fill="#ffffff" shape-rendering="geometricPrecision"/>
<rect x="389" y="407.30" width="136" height="0.65" fill="#000000" shape-rendering="geometricPrecision"/>
<rect x="389" y="410.20" width="136" height="0.65" fill="#000000" shape-rendering="geometricPrecision"/>
<rect x="389" y="411.50" width="136" height="0.8" fill="#ffffff" shape-rendering="geometricPrecision"/>
<rect x="389" y="413.10" width="136" height="0.65" fill="#000000" shape-rendering="geometricPrecision"/>
<rect x="389" y="416.00" width="136" height="0.65" fill="#000000" shape-rendering="geometricPrecision"/>
<rect x="389" y="417.30" width="136" height="0.8" fill="#ffffff" shape-rendering="geometricPrecision"/>
<rect x="389" y="418.90" width="136" height="0.65" fill="#000000" shape-rendering="geometricPrecision"/>
<rect x="389" y="421.80" width="136" height="0.65" fill="#000000" shape-rendering="geometricPrecision"/>
<rect x="389" y="423.10" width="136" height="0.8" fill="#ffffff" shape-rendering="geometricPrecision"/>
<rect x="389" y="424.70" width="136" height="0.65" fill="#000000" shape-rendering="geometricPrecision"/>
<rect x="389" y="427.60" width="136" height="0.65" fill="#000000" shape-rendering="geometricPrecision"/>
<rect x="389" y="428.90" width="136" height="0.8" fill="#ffffff" shape-rendering="geometricPrecision"/>
<rect x="389" y="430.50" width="136" height="0.65" fill="#000000" shape-rendering="geometricPrecision"/>
<rect x="389" y="351.8" width="136" height="1" fill="#ffffff" opacity="0.7" shape-rendering="geometricPrecision"/>
<rect x="389" y="389" width="136" height="1" fill="#ffffff" opacity="0.7" shape-rendering="geometricPrecision"/>
<rect x="389" y="426" width="136" height="1" fill="#ffffff" opacity="0.7" shape-rendering="geometricPrecision"/>
<rect x="389" y="344.2" width="22.5" height="86.8" fill="#33cc33" shape-rendering="geometricPrecision"/>
<line x1="416.40" y1="339" x2="416.40" y2="431" stroke="#000" stroke-width="1" shape-rendering="geometricPrecision"/>
<line x1="443.70" y1="339" x2="443.70" y2="431" stroke="#000" stroke-width="1" shape-rendering="geometricPrecision"/>
<line x1="471.40" y1="339" x2="471.40" y2="431" stroke="#000" stroke-width="1" shape-rendering="geometricPrecision"/>
<line x1="498.70" y1="339" x2="498.70" y2="431" stroke="#000" stroke-width="1" shape-rendering="geometricPrecision"/>
<rect x="389.5" y="339.5" width="136" height="92" fill="none" stroke="#111" stroke-width="1"/>
<text x="385.5" y="433.0" font-size="5.6" fill="#111" text-anchor="end" font-weight="normal" font-style="normal" textLength="10.2" lengthAdjust="spacingAndGlyphs" stroke="#111" stroke-width="0.15" >13.5</text>
<line x1="386" y1="431.5" x2="389" y2="431.5" stroke="#333" stroke-width="1"/>
<text x="385.5" y="425.3333333333333" font-size="5.6" fill="#111" text-anchor="end" font-weight="normal" font-style="normal" textLength="10.2" lengthAdjust="spacingAndGlyphs" stroke="#111" stroke-width="0.15" >14.5</text>
<line x1="386" y1="423.5" x2="389" y2="423.5" stroke="#333" stroke-width="1"/>
<text x="385.5" y="417.6666666666667" font-size="5.6" fill="#111" text-anchor="end" font-weight="normal" font-style="normal" textLength="10.2" lengthAdjust="spacingAndGlyphs" stroke="#111" stroke-width="0.15" >15.5</text>
<line x1="386" y1="416.5" x2="389" y2="416.5" stroke="#333" stroke-width="1"/>
<text x="385.5" y="410.0" font-size="5.6" fill="#111" text-anchor="end" font-weight="normal" font-style="normal" textLength="10.2" lengthAdjust="spacingAndGlyphs" stroke="#111" stroke-width="0.15" >16.5</text>
<line x1="386" y1="408.5" x2="389" y2="408.5" stroke="#333" stroke-width="1"/>
<text x="385.5" y="402.3333333333333" font-size="5.6" fill="#111" text-anchor="end" font-weight="normal" font-style="normal" textLength="10.2" lengthAdjust="spacingAndGlyphs" stroke="#111" stroke-width="0.15" >17.5</text>
<line x1="386" y1="400.5" x2="389" y2="400.5" stroke="#333" stroke-width="1"/>
<text x="385.5" y="394.6666666666667" font-size="5.6" fill="#111" text-anchor="end" font-weight="normal" font-style="normal" textLength="10.2" lengthAdjust="spacingAndGlyphs" stroke="#111" stroke-width="0.15" >18.5</text>
<line x1="386" y1="393.5" x2="389" y2="393.5" stroke="#333" stroke-width="1"/>
<text x="385.5" y="387.0" font-size="5.6" fill="#111" text-anchor="end" font-weight="normal" font-style="normal" textLength="10.2" lengthAdjust="spacingAndGlyphs" stroke="#111" stroke-width="0.15" >19.5</text>
<line x1="386" y1="385.5" x2="389" y2="385.5" stroke="#333" stroke-width="1"/>
<text x="385.5" y="379.3333333333333" font-size="5.6" fill="#111" text-anchor="end" font-weight="normal" font-style="normal" textLength="10.2" lengthAdjust="spacingAndGlyphs" stroke="#111" stroke-width="0.15" >20.5</text>
<line x1="386" y1="377.5" x2="389" y2="377.5" stroke="#333" stroke-width="1"/>
<text x="385.5" y="371.6666666666667" font-size="5.6" fill="#111" text-anchor="end" font-weight="normal" font-style="normal" textLength="10.2" lengthAdjust="spacingAndGlyphs" stroke="#111" stroke-width="0.15" >21.5</text>
<line x1="386" y1="370.5" x2="389" y2="370.5" stroke="#333" stroke-width="1"/>
<text x="385.5" y="364.0" font-size="5.6" fill="#111" text-anchor="end" font-weight="normal" font-style="normal" textLength="10.2" lengthAdjust="spacingAndGlyphs" stroke="#111" stroke-width="0.15" >22.5</text>
<line x1="386" y1="362.5" x2="389" y2="362.5" stroke="#333" stroke-width="1"/>
<text x="385.5" y="356.3333333333333" font-size="5.6" fill="#111" text-anchor="end" font-weight="normal" font-style="normal" textLength="10.2" lengthAdjust="spacingAndGlyphs" stroke="#111" stroke-width="0.15" >23.5</text>
<line x1="386" y1="354.5" x2="389" y2="354.5" stroke="#333" stroke-width="1"/>
<text x="385.5" y="348.6666666666667" font-size="5.6" fill="#111" text-anchor="end" font-weight="normal" font-style="normal" textLength="10.2" lengthAdjust="spacingAndGlyphs" stroke="#111" stroke-width="0.15" >24.5</text>
<line x1="386" y1="347.5" x2="389" y2="347.5" stroke="#333" stroke-width="1"/>
<text x="385.5" y="341.0" font-size="5.6" fill="#111" text-anchor="end" font-weight="normal" font-style="normal" textLength="10.2" lengthAdjust="spacingAndGlyphs" stroke="#111" stroke-width="0.15" >25.5</text>
<line x1="386" y1="339.5" x2="389" y2="339.5" stroke="#333" stroke-width="1"/>
<line x1="389.5" y1="431" x2="389.5" y2="434" stroke="#222" stroke-width="1"/>
<line x1="416.5" y1="431" x2="416.5" y2="434" stroke="#222" stroke-width="1"/>
<line x1="443.5" y1="431" x2="443.5" y2="434" stroke="#222" stroke-width="1"/>
<line x1="471.5" y1="431" x2="471.5" y2="434" stroke="#222" stroke-width="1"/>
<line x1="498.5" y1="431" x2="498.5" y2="434" stroke="#222" stroke-width="1"/>
<line x1="525.5" y1="431" x2="525.5" y2="434" stroke="#222" stroke-width="1"/>
<line x1="411" y1="421" x2="525" y2="421" stroke="#e81818" stroke-width="2" stroke-dasharray="5 3"/>
<line x1="389" y1="421" x2="411" y2="421" stroke="#a83a10" stroke-width="2" stroke-dasharray="5 3"/>
<path d="M411.0 344.2 L417.0 344.2 L418.0 358.7 L437.7 358.7 L439.0 374.2 L463.2 374.2 L464.0 395.0 L481.2 395.0 L483.0 410.8 L508.0 410.8 L510.0 428.3 L517.2 428.3" fill="none" stroke="#1c7a1c" stroke-width="2" stroke-dasharray="2 0.8" shape-rendering="geometricPrecision"/>
<text x="0" y="0" font-size="9" fill="#111" stroke="#111" stroke-width="0.2" text-anchor="middle" transform="translate(363.5,385) rotate(-90)" textLength="56" lengthAdjust="spacingAndGlyphs">Battery Voltage</text>
<text x="389.0" y="444.8" font-size="10.5" fill="#222" text-anchor="middle" font-weight="normal" font-style="normal" stroke="#222" stroke-width="0.15" >0</text>
<text x="416.2" y="444.8" font-size="10.5" fill="#222" text-anchor="middle" font-weight="normal" font-style="normal" stroke="#222" stroke-width="0.15" >13</text>
<text x="443.4" y="444.8" font-size="10.5" fill="#222" text-anchor="middle" font-weight="normal" font-style="normal" stroke="#222" stroke-width="0.15" >26</text>
<text x="470.6" y="444.8" font-size="10.5" fill="#222" text-anchor="middle" font-weight="normal" font-style="normal" stroke="#222" stroke-width="0.15" >39</text>
<text x="497.8" y="444.8" font-size="10.5" fill="#222" text-anchor="middle" font-weight="normal" font-style="normal" stroke="#222" stroke-width="0.15" >52</text>
<text x="525.0" y="444.8" font-size="10.5" fill="#222" text-anchor="middle" font-weight="normal" font-style="normal" stroke="#222" stroke-width="0.15" >65</text>
<text x="429" y="458.5" font-size="9" fill="#222" text-anchor="start" font-weight="normal" font-style="normal" textLength="58.2" lengthAdjust="spacingAndGlyphs" stroke="#222" stroke-width="0.15" >Discharge Time</text>
<text x="404.7" y="477.3" font-size="9" fill="#111" text-anchor="start" font-weight="normal" font-style="normal" textLength="86.7" lengthAdjust="spacingAndGlyphs" stroke="#111" stroke-width="0.15" >Battery Voltage = 24.821</text>
<text x="425.6" y="487" font-size="8" fill="#111" text-anchor="start" font-weight="normal" font-style="normal" textLength="51.5" lengthAdjust="spacingAndGlyphs" stroke="#111" stroke-width="0.15" >Batt. Limit = 15</text>
<rect x="561" y="315" width="200" height="152" fill="#ffffff" />
<text x="632" y="326.8" font-size="9" fill="#222" text-anchor="start" font-weight="normal" font-style="normal" textLength="57.5" lengthAdjust="spacingAndGlyphs" stroke="#222" stroke-width="0.15" >Kilo-Watt Hours</text>
<rect x="599" y="341" width="141" height="89" fill="#aeaeae"/>
<rect x="599" y="342.60" width="141" height="0.65" fill="#000000" shape-rendering="geometricPrecision"/>
<rect x="599" y="343.90" width="141" height="0.8" fill="#ffffff" shape-rendering="geometricPrecision"/>
<rect x="599" y="345.50" width="141" height="0.65" fill="#000000" shape-rendering="geometricPrecision"/>
<rect x="599" y="348.40" width="141" height="0.65" fill="#000000" shape-rendering="geometricPrecision"/>
<rect x="599" y="349.70" width="141" height="0.8" fill="#ffffff" shape-rendering="geometricPrecision"/>
<rect x="599" y="351.30" width="141" height="0.65" fill="#000000" shape-rendering="geometricPrecision"/>
<rect x="599" y="354.20" width="141" height="0.65" fill="#000000" shape-rendering="geometricPrecision"/>
<rect x="599" y="355.50" width="141" height="0.8" fill="#ffffff" shape-rendering="geometricPrecision"/>
<rect x="599" y="357.10" width="141" height="0.65" fill="#000000" shape-rendering="geometricPrecision"/>
<rect x="599" y="360.00" width="141" height="0.65" fill="#000000" shape-rendering="geometricPrecision"/>
<rect x="599" y="361.30" width="141" height="0.8" fill="#ffffff" shape-rendering="geometricPrecision"/>
<rect x="599" y="362.90" width="141" height="0.65" fill="#000000" shape-rendering="geometricPrecision"/>
<rect x="599" y="365.80" width="141" height="0.65" fill="#000000" shape-rendering="geometricPrecision"/>
<rect x="599" y="367.10" width="141" height="0.8" fill="#ffffff" shape-rendering="geometricPrecision"/>
<rect x="599" y="368.70" width="141" height="0.65" fill="#000000" shape-rendering="geometricPrecision"/>
<rect x="599" y="371.60" width="141" height="0.65" fill="#000000" shape-rendering="geometricPrecision"/>
<rect x="599" y="372.90" width="141" height="0.8" fill="#ffffff" shape-rendering="geometricPrecision"/>
<rect x="599" y="374.50" width="141" height="0.65" fill="#000000" shape-rendering="geometricPrecision"/>
<rect x="599" y="377.40" width="141" height="0.65" fill="#000000" shape-rendering="geometricPrecision"/>
<rect x="599" y="378.70" width="141" height="0.8" fill="#ffffff" shape-rendering="geometricPrecision"/>
<rect x="599" y="380.30" width="141" height="0.65" fill="#000000" shape-rendering="geometricPrecision"/>
<rect x="599" y="383.20" width="141" height="0.65" fill="#000000" shape-rendering="geometricPrecision"/>
<rect x="599" y="384.50" width="141" height="0.8" fill="#ffffff" shape-rendering="geometricPrecision"/>
<rect x="599" y="386.10" width="141" height="0.65" fill="#000000" shape-rendering="geometricPrecision"/>
<rect x="599" y="389.00" width="141" height="0.65" fill="#000000" shape-rendering="geometricPrecision"/>
<rect x="599" y="390.30" width="141" height="0.8" fill="#ffffff" shape-rendering="geometricPrecision"/>
<rect x="599" y="391.90" width="141" height="0.65" fill="#000000" shape-rendering="geometricPrecision"/>
<rect x="599" y="394.80" width="141" height="0.65" fill="#000000" shape-rendering="geometricPrecision"/>
<rect x="599" y="396.10" width="141" height="0.8" fill="#ffffff" shape-rendering="geometricPrecision"/>
<rect x="599" y="397.70" width="141" height="0.65" fill="#000000" shape-rendering="geometricPrecision"/>
<rect x="599" y="400.60" width="141" height="0.65" fill="#000000" shape-rendering="geometricPrecision"/>
<rect x="599" y="401.90" width="141" height="0.8" fill="#ffffff" shape-rendering="geometricPrecision"/>
<rect x="599" y="403.50" width="141" height="0.65" fill="#000000" shape-rendering="geometricPrecision"/>
<rect x="599" y="406.40" width="141" height="0.65" fill="#000000" shape-rendering="geometricPrecision"/>
<rect x="599" y="407.70" width="141" height="0.8" fill="#ffffff" shape-rendering="geometricPrecision"/>
<rect x="599" y="409.30" width="141" height="0.65" fill="#000000" shape-rendering="geometricPrecision"/>
<rect x="599" y="412.20" width="141" height="0.65" fill="#000000" shape-rendering="geometricPrecision"/>
<rect x="599" y="413.50" width="141" height="0.8" fill="#ffffff" shape-rendering="geometricPrecision"/>
<rect x="599" y="415.10" width="141" height="0.65" fill="#000000" shape-rendering="geometricPrecision"/>
<rect x="599" y="418.00" width="141" height="0.65" fill="#000000" shape-rendering="geometricPrecision"/>
<rect x="599" y="419.30" width="141" height="0.8" fill="#ffffff" shape-rendering="geometricPrecision"/>
<rect x="599" y="420.90" width="141" height="0.65" fill="#000000" shape-rendering="geometricPrecision"/>
<rect x="599" y="423.80" width="141" height="0.65" fill="#000000" shape-rendering="geometricPrecision"/>
<rect x="599" y="425.10" width="141" height="0.8" fill="#ffffff" shape-rendering="geometricPrecision"/>
<rect x="599" y="426.70" width="141" height="0.65" fill="#000000" shape-rendering="geometricPrecision"/>
<line x1="627.40" y1="341" x2="627.40" y2="430" stroke="#000" stroke-width="1" shape-rendering="geometricPrecision"/>
<line x1="655.30" y1="341" x2="655.30" y2="430" stroke="#000" stroke-width="1" shape-rendering="geometricPrecision"/>
<line x1="683.40" y1="341" x2="683.40" y2="430" stroke="#000" stroke-width="1" shape-rendering="geometricPrecision"/>
<line x1="712.30" y1="341" x2="712.30" y2="430" stroke="#000" stroke-width="1" shape-rendering="geometricPrecision"/>
<rect x="599.5" y="341.5" width="141" height="89" fill="none" stroke="#111" stroke-width="1"/>
<text x="596.5" y="433.0" font-size="8" fill="#333" text-anchor="end" font-weight="normal" font-style="normal" stroke="#333" stroke-width="0.15" >0</text>
<line x1="596" y1="430.5" x2="599" y2="430.5" stroke="#222" stroke-width="1"/>
<text x="596.5" y="424.1" font-size="8" fill="#333" text-anchor="end" font-weight="normal" font-style="normal" stroke="#333" stroke-width="0.15" >1</text>
<line x1="596" y1="421.5" x2="599" y2="421.5" stroke="#222" stroke-width="1"/>
<text x="596.5" y="415.2" font-size="8" fill="#333" text-anchor="end" font-weight="normal" font-style="normal" stroke="#333" stroke-width="0.15" >2</text>
<line x1="596" y1="412.5" x2="599" y2="412.5" stroke="#222" stroke-width="1"/>
<text x="596.5" y="406.3" font-size="8" fill="#333" text-anchor="end" font-weight="normal" font-style="normal" stroke="#333" stroke-width="0.15" >3</text>
<line x1="596" y1="403.5" x2="599" y2="403.5" stroke="#222" stroke-width="1"/>
<text x="596.5" y="397.4" font-size="8" fill="#333" text-anchor="end" font-weight="normal" font-style="normal" stroke="#333" stroke-width="0.15" >4</text>
<line x1="596" y1="394.5" x2="599" y2="394.5" stroke="#222" stroke-width="1"/>
<text x="596.5" y="388.5" font-size="8" fill="#333" text-anchor="end" font-weight="normal" font-style="normal" stroke="#333" stroke-width="0.15" >5</text>
<line x1="596" y1="386.5" x2="599" y2="386.5" stroke="#222" stroke-width="1"/>
<text x="596.5" y="379.6" font-size="8" fill="#333" text-anchor="end" font-weight="normal" font-style="normal" stroke="#333" stroke-width="0.15" >6</text>
<line x1="596" y1="377.5" x2="599" y2="377.5" stroke="#222" stroke-width="1"/>
<text x="596.5" y="370.7" font-size="8" fill="#333" text-anchor="end" font-weight="normal" font-style="normal" stroke="#333" stroke-width="0.15" >7</text>
<line x1="596" y1="368.5" x2="599" y2="368.5" stroke="#222" stroke-width="1"/>
<text x="596.5" y="361.8" font-size="8" fill="#333" text-anchor="end" font-weight="normal" font-style="normal" stroke="#333" stroke-width="0.15" >8</text>
<line x1="596" y1="359.5" x2="599" y2="359.5" stroke="#222" stroke-width="1"/>
<text x="596.5" y="352.9" font-size="8" fill="#333" text-anchor="end" font-weight="normal" font-style="normal" stroke="#333" stroke-width="0.15" >9</text>
<line x1="596" y1="350.5" x2="599" y2="350.5" stroke="#222" stroke-width="1"/>
<text x="596.5" y="344.0" font-size="8" fill="#333" text-anchor="end" font-weight="normal" font-style="normal" stroke="#333" stroke-width="0.15" >10</text>
<line x1="596" y1="341.5" x2="599" y2="341.5" stroke="#222" stroke-width="1"/>
<line x1="599.5" y1="430" x2="599.5" y2="433" stroke="#222" stroke-width="1"/>
<line x1="627.5" y1="430" x2="627.5" y2="433" stroke="#222" stroke-width="1"/>
<line x1="655.5" y1="430" x2="655.5" y2="433" stroke="#222" stroke-width="1"/>
<line x1="684.5" y1="430" x2="684.5" y2="433" stroke="#222" stroke-width="1"/>
<line x1="712.5" y1="430" x2="712.5" y2="433" stroke="#222" stroke-width="1"/>
<line x1="740.5" y1="430" x2="740.5" y2="433" stroke="#222" stroke-width="1"/>
<path d="M599 430 L599 428.5 L623 416.8 L623 430 Z" fill="#33cc33" shape-rendering="geometricPrecision"/>
<path d="M598.9 428.9 L622.1 417.3 L626.9 413.4 L655.6 399.8 L683.6 385.7 L712.1 374.7 L732.4 368.3" fill="none" stroke="#1c7a1c" stroke-width="2" stroke-dasharray="2 0.8" shape-rendering="geometricPrecision"/>
<text x="0" y="0" font-size="9" fill="#111" stroke="#111" stroke-width="0.2" text-anchor="middle" transform="translate(576.3,385) rotate(-90)" textLength="56" lengthAdjust="spacingAndGlyphs">Kilo-Watt Hours</text>
<text x="599.0" y="444.8" font-size="10.5" fill="#222" text-anchor="middle" font-weight="normal" font-style="normal" stroke="#222" stroke-width="0.15" >0</text>
<text x="627.2" y="444.8" font-size="10.5" fill="#222" text-anchor="middle" font-weight="normal" font-style="normal" stroke="#222" stroke-width="0.15" >13</text>
<text x="655.4" y="444.8" font-size="10.5" fill="#222" text-anchor="middle" font-weight="normal" font-style="normal" stroke="#222" stroke-width="0.15" >26</text>
<text x="683.6" y="444.8" font-size="10.5" fill="#222" text-anchor="middle" font-weight="normal" font-style="normal" stroke="#222" stroke-width="0.15" >39</text>
<text x="711.8" y="444.8" font-size="10.5" fill="#222" text-anchor="middle" font-weight="normal" font-style="normal" stroke="#222" stroke-width="0.15" >52</text>
<text x="740.0" y="444.8" font-size="10.5" fill="#222" text-anchor="middle" font-weight="normal" font-style="normal" stroke="#222" stroke-width="0.15" >65</text>
<text x="642" y="458.5" font-size="9" fill="#222" text-anchor="start" font-weight="normal" font-style="normal" textLength="58.2" lengthAdjust="spacingAndGlyphs" stroke="#222" stroke-width="0.15" >Discharge Time</text>
<text x="634.8" y="477.3" font-size="9" fill="#111" text-anchor="start" font-weight="normal" font-style="normal" textLength="86" lengthAdjust="spacingAndGlyphs" stroke="#111" stroke-width="0.15" >KiloWatt-Hours = 01.573</text>
<text x="50.4" y="533.5" font-size="28" fill="#1d1d1f" text-anchor="start" font-weight="bold" font-style="italic" textLength="676" lengthAdjust="spacingAndGlyphs" >Generate Reports for Voltage, SG, and Temperature</text>
</svg></body></html>
